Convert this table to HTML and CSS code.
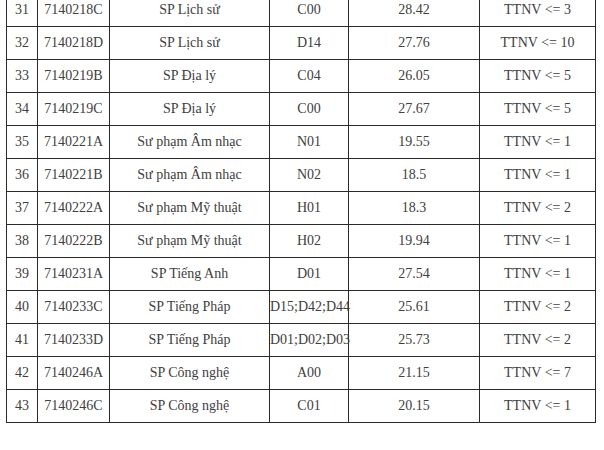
FILE: index.html
```html
<!DOCTYPE html>
<html lang="vi">
<head>
<meta charset="utf-8">
<link rel="stylesheet" href="styles.css">
</head>
<body>
<div class="wrap">
<table class="grid">
<colgroup>
<col class="c-stt"><col class="c-code"><col class="c-name"><col class="c-block"><col class="c-score"><col class="c-note">
</colgroup>
<tbody>
<tr><td>31</td><td>7140218C</td><td>SP Lịch sử</td><td>C00</td><td>28.42</td><td>TTNV &lt;= 3</td></tr>
<tr><td>32</td><td>7140218D</td><td>SP Lịch sử</td><td>D14</td><td>27.76</td><td>TTNV &lt;= 10</td></tr>
<tr><td>33</td><td>7140219B</td><td>SP Địa lý</td><td>C04</td><td>26.05</td><td>TTNV &lt;= 5</td></tr>
<tr><td>34</td><td>7140219C</td><td>SP Địa lý</td><td>C00</td><td>27.67</td><td>TTNV &lt;= 5</td></tr>
<tr><td>35</td><td>7140221A</td><td>Sư phạm Âm nhạc</td><td>N01</td><td>19.55</td><td>TTNV &lt;= 1</td></tr>
<tr><td>36</td><td>7140221B</td><td>Sư phạm Âm nhạc</td><td>N02</td><td>18.5</td><td>TTNV &lt;= 1</td></tr>
<tr><td>37</td><td>7140222A</td><td>Sư phạm Mỹ thuật</td><td>H01</td><td>18.3</td><td>TTNV &lt;= 2</td></tr>
<tr><td>38</td><td>7140222B</td><td>Sư phạm Mỹ thuật</td><td>H02</td><td>19.94</td><td>TTNV &lt;= 1</td></tr>
<tr><td>39</td><td>7140231A</td><td>SP Tiếng Anh</td><td>D01</td><td>27.54</td><td>TTNV &lt;= 1</td></tr>
<tr><td>40</td><td>7140233C</td><td>SP Tiếng Pháp</td><td>D15;D42;D44</td><td>25.61</td><td>TTNV &lt;= 2</td></tr>
<tr><td>41</td><td>7140233D</td><td>SP Tiếng Pháp</td><td>D01;D02;D03</td><td>25.73</td><td>TTNV &lt;= 2</td></tr>
<tr><td>42</td><td>7140246A</td><td>SP Công nghệ</td><td>A00</td><td>21.15</td><td>TTNV &lt;= 7</td></tr>
<tr><td>43</td><td>7140246C</td><td>SP Công nghệ</td><td>C01</td><td>20.15</td><td>TTNV &lt;= 1</td></tr>
</tbody>
</table>
</div>
</body>
</html>
```
FILE: styles.css
```css
html, body {
  margin: 0;
  background: #ffffff;
}
.wrap {
  padding-left: 6px;
  margin-top: -7px;
}
.grid {
  border-collapse: collapse;
  table-layout: fixed;
  width: 589px;
  font-family: "Liberation Serif", serif;
  font-size: 14px;
  color: #404040;
}
.c-stt { width: 31px; }
.c-code { width: 72px; }
.c-name { width: 160px; }
.c-block { width: 79px; }
.c-score { width: 131px; }
.c-note { width: 116px; }
.grid td {
  border: 1px solid #2a2a2a;
  height: 32px;
  padding: 0;
  text-align: center;
  vertical-align: middle;
  white-space: nowrap;
}
```
